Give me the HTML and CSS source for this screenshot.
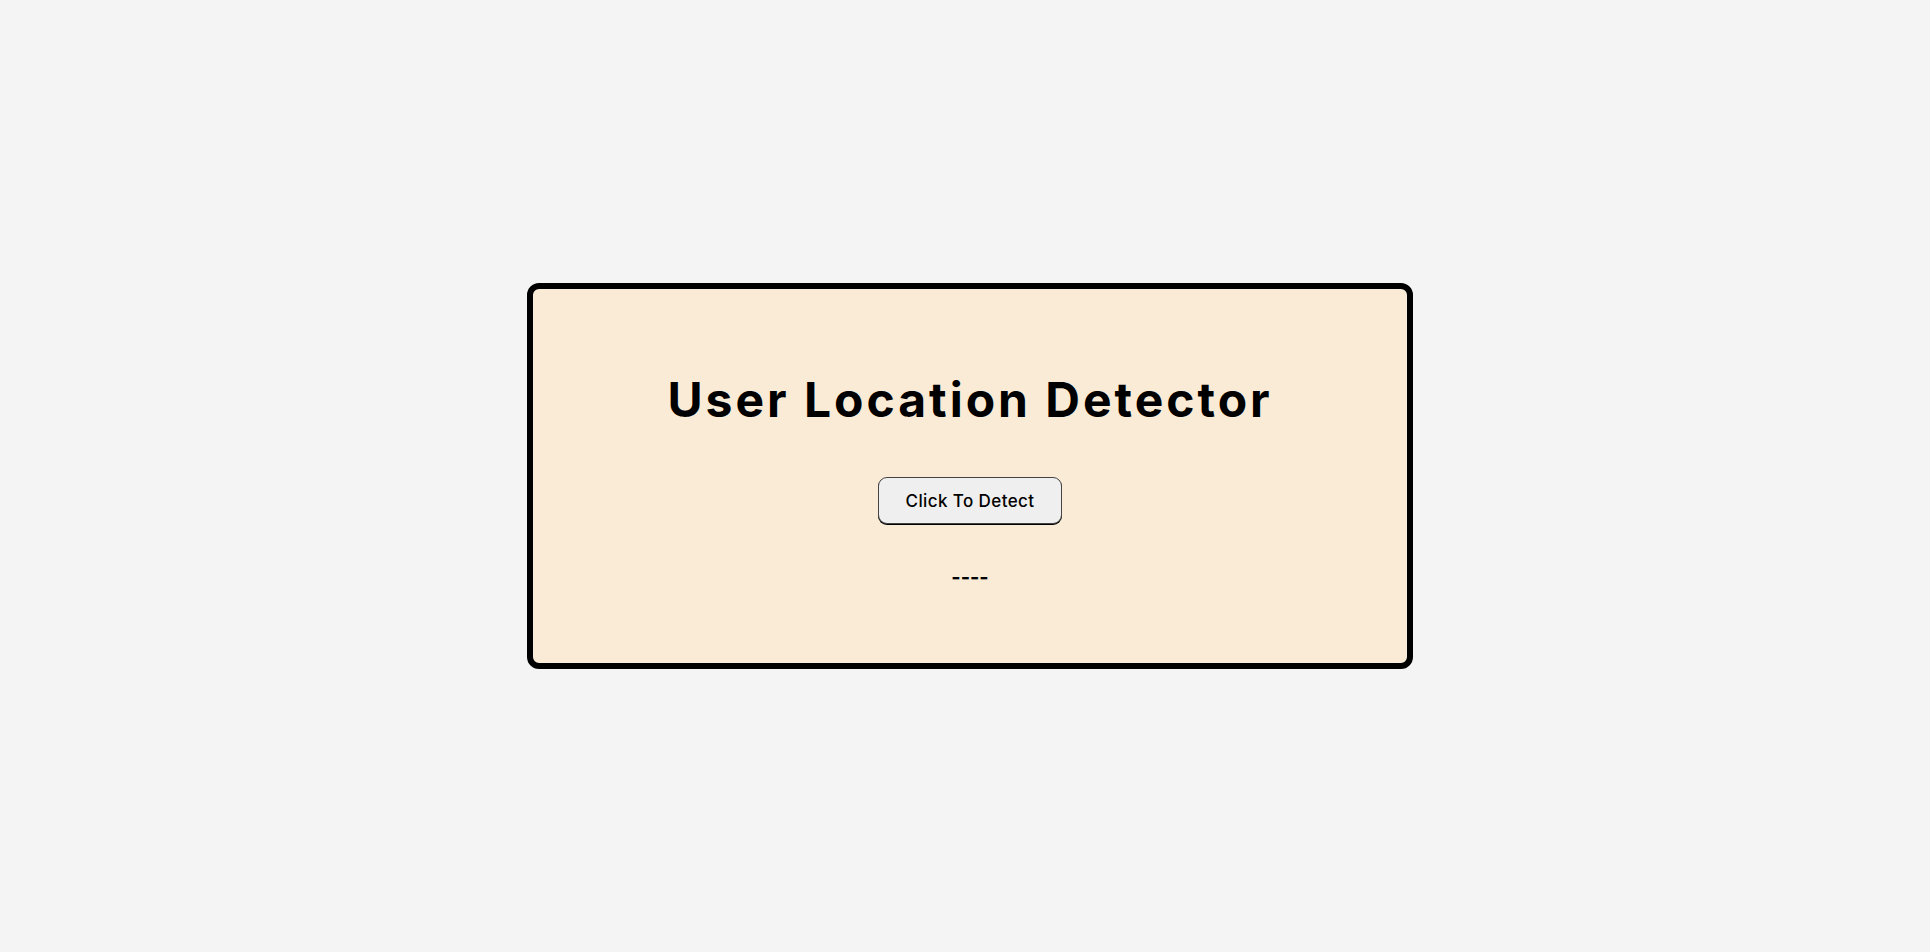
FILE: index.html
```html
<!DOCTYPE html>
<html lang="en">
<head>
<meta charset="utf-8">
<title>User Location Detector</title>
<link rel="stylesheet" href="styles.css">
</head>
<body>
<main class="card">
  <h1 class="title">User Location Detector</h1>
  <button class="detect-btn" type="button">Click To Detect</button>
  <p class="result">----</p>
</main>
</body>
</html>
```
FILE: styles.css
```css
* { box-sizing: border-box; }
html, body { margin: 0; height: 100%; }
body {
  background: #f4f4f4;
  font-family: Inter, "Open Sans", "Liberation Sans", sans-serif;
  color: #000;
  display: flex;
  align-items: center;
  justify-content: center;
  padding-left: 10px;
}
.card {
  width: 886px;
  height: 386px;
  background: #faebd7;
  border: 6px solid #000;
  border-radius: 12px;
  display: flex;
  flex-direction: column;
  align-items: center;
  padding-top: 87px;
}
.title {
  margin: 0;
  font-size: 48px;
  line-height: 48px;
  font-weight: 700;
  letter-spacing: 3px;
}
.detect-btn {
  margin-top: 53px;
  width: 184px;
  height: 47px;
  background: #efefef;
  border: 1px solid #444;
  border-radius: 9px;
  box-shadow: 0 1px 0 #000;
  font-family: inherit;
  font-size: 17px;
  font-weight: 500;
  letter-spacing: 0.4px;
  color: #000;
}
.result {
  margin: 41px 0 0;
  font-size: 20px;
  line-height: 24px;
  font-weight: 700;
}
```
